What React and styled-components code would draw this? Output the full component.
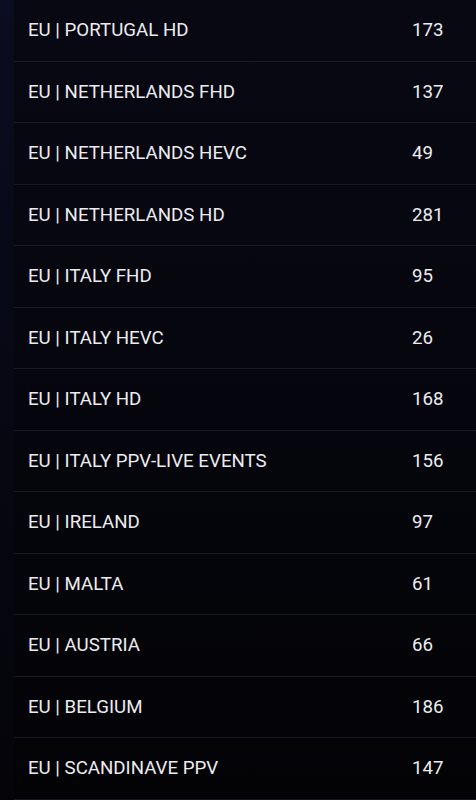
import React from "react";
import styled, { createGlobalStyle } from "styled-components";

const GlobalStyle = createGlobalStyle`
  html, body {
    margin: 0;
    padding: 0;
    background: #05060c;
    overflow: hidden;
  }
`;

const Page = styled.div`
  display: flex;
  width: 476px;
  height: 800px;
  background: linear-gradient(180deg, #0b0d20 0%, #070814 45%, #040409 100%);
  font-family: Roboto, "Noto Sans", sans-serif;
`;

const List = styled.ul`
  flex: 1;
  margin: 0 0 0 14px;
  padding: 0;
  list-style: none;
  background: linear-gradient(180deg, #070812 0%, #05060d 50%, #030306 100%);
`;

const Row = styled.li`
  display: flex;
  align-items: center;
  height: 60.5px;
  padding-left: 14px;
  border-bottom: 1px solid #181925;
  color: #ececf0;
  font-size: 18.7px;
  line-height: 1;
  padding-top: 1px;
  box-sizing: border-box;
  height: 61.5px;
`;

const Name = styled.span`
  flex: 1;
`;

const Count = styled.span`
  width: 64px;
`;

const channels = [
  ["EU | PORTUGAL HD", 173],
  ["EU | NETHERLANDS FHD", 137],
  ["EU | NETHERLANDS HEVC", 49],
  ["EU | NETHERLANDS HD", 281],
  ["EU | ITALY FHD", 95],
  ["EU | ITALY HEVC", 26],
  ["EU | ITALY HD", 168],
  ["EU | ITALY PPV-LIVE EVENTS", 156],
  ["EU | IRELAND", 97],
  ["EU | MALTA", 61],
  ["EU | AUSTRIA", 66],
  ["EU | BELGIUM", 186],
  ["EU | SCANDINAVE PPV", 147],
];

export default function App() {
  return (
    <Page>
      <GlobalStyle />
      <List>
        {channels.map(([name, count]) => (
          <Row key={name}>
            <Name>{name}</Name>
            <Count>{count}</Count>
          </Row>
        ))}
      </List>
    </Page>
  );
}
